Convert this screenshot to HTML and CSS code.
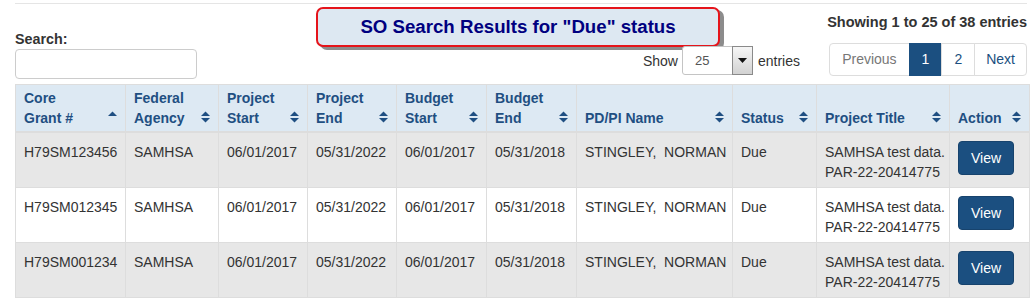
FILE: index.html
```html
<!DOCTYPE html>
<html lang="en">
<head>
<meta charset="utf-8">
<title>SO Search Results</title>
<link rel="stylesheet" href="styles.css">
</head>
<body>
<div class="page">
  <div class="rule"></div>
  <div class="topbar">
    <div class="search">
      <label class="search-label" for="q">Search:</label>
      <input class="search-input" id="q" type="search">
    </div>
    <div class="mid">
      <div class="title">SO Search Results for "Due" status</div>
      <div class="length">
        <span>Show</span>
        <div class="select">
          <span class="sel-val">25</span>
          <span class="sel-btn"><svg width="9" height="5" viewBox="0 0 9 5"><polygon points="0,0 9,0 4.5,5" fill="#111"/></svg></span>
        </div>
        <span>entries</span>
      </div>
    </div>
    <div class="right">
      <div class="info">Showing 1 to 25 of 38 entries</div>
      <ul class="pagination">
        <li class="pg first disabled">Previous</li>
        <li class="pg active">1</li>
        <li class="pg">2</li>
        <li class="pg last">Next</li>
      </ul>
    </div>
  </div>

  <table class="grid">
    <colgroup>
      <col class="c1"><col class="c2"><col class="c3"><col class="c4"><col class="c5">
      <col class="c6"><col class="c7"><col class="c8"><col class="c9"><col class="c10">
    </colgroup>
    <thead>
      <tr>
        <th><div class="th-in"><span>Core<br>Grant #</span><svg class="sort" viewBox="0 0 9 12"><polygon points="0,5 4.5,0.5 9,5"/></svg></div></th>
        <th><div class="th-in"><span>Federal<br>Agency</span><svg class="sort" viewBox="0 0 9 12"><polygon points="0,5 4.5,0.5 9,5"/><polygon points="0,7 9,7 4.5,11.5"/></svg></div></th>
        <th><div class="th-in"><span>Project<br>Start</span><svg class="sort" viewBox="0 0 9 12"><polygon points="0,5 4.5,0.5 9,5"/><polygon points="0,7 9,7 4.5,11.5"/></svg></div></th>
        <th><div class="th-in"><span>Project<br>End</span><svg class="sort" viewBox="0 0 9 12"><polygon points="0,5 4.5,0.5 9,5"/><polygon points="0,7 9,7 4.5,11.5"/></svg></div></th>
        <th><div class="th-in"><span>Budget<br>Start</span><svg class="sort" viewBox="0 0 9 12"><polygon points="0,5 4.5,0.5 9,5"/><polygon points="0,7 9,7 4.5,11.5"/></svg></div></th>
        <th><div class="th-in"><span>Budget<br>End</span><svg class="sort" viewBox="0 0 9 12"><polygon points="0,5 4.5,0.5 9,5"/><polygon points="0,7 9,7 4.5,11.5"/></svg></div></th>
        <th><div class="th-in"><span>PD/PI Name</span><svg class="sort" viewBox="0 0 9 12"><polygon points="0,5 4.5,0.5 9,5"/><polygon points="0,7 9,7 4.5,11.5"/></svg></div></th>
        <th><div class="th-in"><span>Status</span><svg class="sort" viewBox="0 0 9 12"><polygon points="0,5 4.5,0.5 9,5"/><polygon points="0,7 9,7 4.5,11.5"/></svg></div></th>
        <th><div class="th-in"><span>Project Title</span><svg class="sort" viewBox="0 0 9 12"><polygon points="0,5 4.5,0.5 9,5"/><polygon points="0,7 9,7 4.5,11.5"/></svg></div></th>
        <th><div class="th-in"><span>Action</span><svg class="sort" viewBox="0 0 9 12"><polygon points="0,5 4.5,0.5 9,5"/><polygon points="0,7 9,7 4.5,11.5"/></svg></div></th>
      </tr>
    </thead>
    <tbody>
      <tr class="odd">
        <td>H79SM123456</td>
        <td>SAMHSA</td>
        <td>06/01/2017</td>
        <td>05/31/2022</td>
        <td>06/01/2017</td>
        <td>05/31/2018</td>
        <td>STINGLEY,&nbsp; NORMAN</td>
        <td>Due</td>
        <td>SAMHSA test data.<br>PAR-22-20414775</td>
        <td><a class="btn-view" href="#">View</a></td>
      </tr>
      <tr class="even">
        <td>H79SM012345</td>
        <td>SAMHSA</td>
        <td>06/01/2017</td>
        <td>05/31/2022</td>
        <td>06/01/2017</td>
        <td>05/31/2018</td>
        <td>STINGLEY,&nbsp; NORMAN</td>
        <td>Due</td>
        <td>SAMHSA test data.<br>PAR-22-20414775</td>
        <td><a class="btn-view" href="#">View</a></td>
      </tr>
      <tr class="odd">
        <td>H79SM001234</td>
        <td>SAMHSA</td>
        <td>06/01/2017</td>
        <td>05/31/2022</td>
        <td>06/01/2017</td>
        <td>05/31/2018</td>
        <td>STINGLEY,&nbsp; NORMAN</td>
        <td>Due</td>
        <td>SAMHSA test data.<br>PAR-22-20414775</td>
        <td><a class="btn-view" href="#">View</a></td>
      </tr>
    </tbody>
  </table>
</div>
</body>
</html>
```

FILE: styles.css
```css
body {
  margin: 0;
  font-family: "Liberation Sans", Arial, sans-serif;
  font-size: 14px;
  line-height: 20px;
  color: #333;
  background: #fff;
}

.page {
  padding: 3px 7px 0 15px;
}

.rule {
  height: 1px;
  background: #e5e5e5;
  margin-right: 1px;
}

.topbar {
  display: flex;
  align-items: flex-start;
  height: 80px;
}

.search {
  width: 182px;
  margin-top: 25px;
}

.search-label {
  display: block;
  font-weight: bold;
  font-size: 14.3px;
}

.search-input {
  display: block;
  box-sizing: border-box;
  width: 182px;
  height: 30px;
  margin: 0;
  padding: 6px 12px;
  border: 1px solid #ccc;
  border-radius: 4px;
  font: inherit;
}

.mid {
  margin-left: 119px;
  width: 484px;
  margin-top: 3px;
  display: flex;
  flex-direction: column;
}

.title {
  box-sizing: border-box;
  width: 404px;
  height: 40px;
  border: 2px solid #e5141b;
  border-radius: 7px;
  background: #dde8f2;
  box-shadow: 4px 3px 0 #8c8c8c;
  display: flex;
  align-items: center;
  justify-content: center;
  font-size: 18.67px;
  font-weight: bold;
  color: #000080;
}

.length {
  display: flex;
  align-items: center;
  justify-content: flex-end;
  margin-top: -1px;
  height: 29px;
}

.select {
  display: flex;
  box-sizing: border-box;
  width: 71px;
  height: 29px;
  margin: 0 5px 0 4px;
  border: 1px solid #c4c4c4;
  border-radius: 3px;
  background: #fff;
}

.sel-val {
  flex: 1;
  padding-left: 12px;
  font-size: 13px;
  line-height: 27px;
  color: #555;
}

.sel-btn {
  width: 19px;
  border: 1px solid #8a8a8a;
  margin: -1px -1px -1px 0;
  background: linear-gradient(#f6f6f6, #d2d2d2);
  display: flex;
  align-items: center;
  justify-content: center;
}

.right {
  margin-left: auto;
  margin-right: 1px;
  padding-top: 8px;
  display: flex;
  flex-direction: column;
  align-items: flex-end;
}

.info {
  font-weight: bold;
  font-size: 14.5px;
}

.pagination {
  display: flex;
  margin: 11px 0 0;
  padding: 0;
  list-style: none;
}

.pg {
  padding: 6px 12px;
  border: 1px solid #ddd;
  margin-left: -1px;
  color: #1b4f80;
  line-height: 19px;
  background: #fff;
}

.pg.first {
  margin-left: 0;
  border-radius: 4px 0 0 4px;
}

.pg.last {
  padding: 6px 11px;
  border-radius: 0 4px 4px 0;
}

.pg.disabled {
  color: #777;
}

.pg.active {
  background: #1b4f80;
  border-color: #1b4f80;
  color: #fff;
}

.grid {
  width: 1014px;
  border-collapse: collapse;
  table-layout: fixed;
}

.c1 { width: 110px; }
.c2 { width: 93px; }
.c3 { width: 89px; }
.c4 { width: 89px; }
.c5 { width: 90px; }
.c6 { width: 90px; }
.c7 { width: 156px; }
.c8 { width: 84px; }
.c9 { width: 133px; }
.c10 { width: 80px; }

.grid th {
  background: #dde9f3;
  color: #1f4f82;
  text-align: left;
  vertical-align: bottom;
  padding: 3px 8px;
  border: 1px solid #ddd;
  border-bottom: 2px solid #ddd;
  font-weight: bold;
}

.th-in {
  display: flex;
  justify-content: space-between;
  align-items: flex-end;
}

.sort {
  width: 9px;
  height: 12px;
  margin-bottom: 5px;
  fill: #1f4f82;
  flex: none;
}

.grid td {
  padding: 9px 8px 5px;
  border: 1px solid #ddd;
  vertical-align: top;
  white-space: nowrap;
}

.grid tr.odd td {
  background: #e7e7e7;
}

.grid tr.even td {
  background: #fff;
}

.btn-view {
  display: inline-block;
  margin-top: -1px;
  padding: 6px 12px;
  background: #1b4f80;
  border: 1px solid #17436d;
  border-radius: 4px;
  color: #fff;
  text-decoration: none;
  line-height: 20px;
}
```
